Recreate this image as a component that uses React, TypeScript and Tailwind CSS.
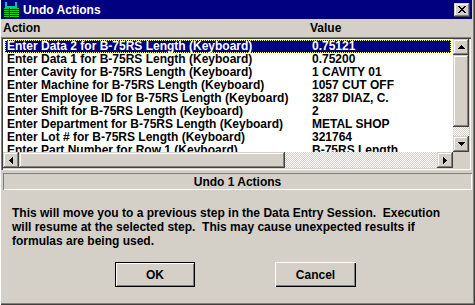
import React from "react";

const raised =
  "shadow-[inset_-1px_-1px_#404040,inset_1px_1px_#d4d0c8,inset_-2px_-2px_#808080,inset_2px_2px_#ffffff]";
const hatch =
  "bg-[repeating-conic-gradient(#ffffff_0%_25%,#d4d0c8_0%_50%)] bg-[length:2px_2px]";

type Dir = "up" | "down" | "left" | "right";

function Tri({ dir }: { dir: Dir }) {
  if (dir === "up" || dir === "down") {
    const rows = dir === "up" ? [0, 1, 2, 3] : [3, 2, 1, 0];
    return (
      <svg width="7" height="4" viewBox="0 0 7 4" shapeRendering="crispEdges">
        {rows.map((r, i) => (
          <rect key={i} x={3 - r} y={i} width={2 * r + 1} height={1} fill="#000" />
        ))}
      </svg>
    );
  }
  const cols = dir === "left" ? [0, 1, 2, 3] : [3, 2, 1, 0];
  return (
    <svg width="4" height="7" viewBox="0 0 4 7" shapeRendering="crispEdges">
      {cols.map((c, i) => (
        <rect key={i} x={i} y={3 - c} width={1} height={2 * c + 1} fill="#000" />
      ))}
    </svg>
  );
}

function ArrowBtn({ dir }: { dir: Dir }) {
  return (
    <div className={`w-4 h-4 shrink-0 bg-[#d4d0c8] flex items-center justify-center ${raised}`}>
      <Tri dir={dir} />
    </div>
  );
}

function AppIcon() {
  return (
    <svg width="16" height="16" viewBox="0 0 16 16" shapeRendering="crispEdges">
      <rect x="1" y="0" width="2" height="6" fill="#00c0c0" />
      <rect x="11" y="0" width="2" height="6" fill="#00c0c0" />
      <rect x="1" y="4" width="12" height="2" fill="#00c0c0" />
      <rect x="3" y="3" width="8" height="1" fill="#000000" />
      <rect x="0" y="6" width="15" height="10" fill="#00e000" />
      {[7, 9, 11, 13, 15].map((y) => (
        <rect key={y} x="0" y={y} width="15" height="1" fill="#000000" />
      ))}
      <rect x="5" y="6" width="1" height="10" fill="#000000" />
      <rect x="15" y="6" width="1" height="10" fill="#000000" />
    </svg>
  );
}

const rows: [string, string][] = [
  ["Enter Data 2 for B-75RS Length (Keyboard)", "0.75121"],
  ["Enter Data 1 for B-75RS Length (Keyboard)", "0.75200"],
  ["Enter Cavity for B-75RS Length (Keyboard)", "1 CAVITY 01"],
  ["Enter Machine for B-75RS Length (Keyboard)", "1057 CUT OFF"],
  ["Enter Employee ID for B-75RS Length (Keyboard)", "3287 DIAZ, C."],
  ["Enter Shift for B-75RS Length (Keyboard)", "2"],
  ["Enter Department for B-75RS Length (Keyboard)", "METAL SHOP"],
  ["Enter Lot # for B-75RS Length (Keyboard)", "321764"],
  ["Enter Part Number for Row 1 (Keyboard)", "B-75RS Length"],
];

export default function App() {
  return (
    <div className="w-[475px] h-[305px] overflow-hidden bg-[#d4d0c8] flex flex-col pl-[1px] pr-[3px] pb-[2px] shadow-[inset_1px_0_#ffffff,inset_-1px_-1px_#404040,inset_-2px_-2px_#808080] font-['Liberation_Sans',Arial,sans-serif] font-bold text-[12px] text-black">
      {/* Title bar */}
      <div className="h-[19px] shrink-0 bg-[#000080] flex items-center pl-[3px] pr-[2px]">
        <AppIcon />
        <span className="ml-[3px] text-white leading-[14px]">Undo Actions</span>
        <div className={`ml-auto w-4 h-[14px] bg-[#d4d0c8] flex items-center justify-center ${raised}`}>
          <svg width="8" height="7" viewBox="0 0 8 7" shapeRendering="crispEdges">
            <path d="M0 0h2v1h-2zM6 0h2v1h-2zM1 1h2v1h-2zM5 1h2v1h-2zM2 2h4v1h-4zM3 3h2v1h-2zM2 4h4v1h-4zM1 5h2v1h-2zM5 5h2v1h-2zM0 6h2v1h-2zM6 6h2v1h-2z" fill="#000" />
          </svg>
        </div>
      </div>

      {/* Column headers */}
      <div className="h-[18px] shrink-0 flex items-center pl-[2px] leading-[14px]">
        <span className="w-[307px]">Action</span>
        <span>Value</span>
      </div>

      {/* List box */}
      <div className="w-[470px] h-[133px] shrink-0 p-[2px] flex flex-col shadow-[inset_1px_1px_#808080,inset_2px_2px_#404040,inset_-1px_-1px_#ffffff,inset_-2px_-2px_#d4d0c8]">
        <div className="flex h-[113px]">
          <div className="flex-1 bg-white overflow-hidden pt-[1px] px-[2px]">
            {rows.map(([a, v], i) => (
              <div
                key={i}
                className={
                  i === 0
                    ? "h-[13px] leading-[13px] flex whitespace-nowrap bg-[#000080] text-white outline-1 outline-dotted outline-[#ffff7f] -outline-offset-1"
                    : "h-[13px] leading-[13px] flex whitespace-nowrap"
                }
              >
                <span className="w-[307px] shrink-0 pl-[2px]">{a}</span>
                <span>{v}</span>
              </div>
            ))}
          </div>
          <div className="w-4 flex flex-col shrink-0">
            <ArrowBtn dir="up" />
            <div className={`h-[72px] bg-[#d4d0c8] ${raised}`} />
            <div className={`flex-1 ${hatch}`} />
            <ArrowBtn dir="down" />
          </div>
        </div>
        <div className="flex h-4">
          <ArrowBtn dir="left" />
          <div className={`w-[266px] h-4 bg-[#d4d0c8] ${raised}`} />
          <div className={`flex-1 ${hatch}`} />
          <ArrowBtn dir="right" />
          <div className="w-4 h-4 bg-[#d4d0c8]" />
        </div>
      </div>

      {/* Status */}
      <div className="mt-[3px] ml-[2px] w-[469px] h-[17px] shrink-0 flex items-center justify-center leading-[14px] shadow-[inset_1px_1px_#808080,inset_-1px_-1px_#ffffff]">
        Undo 1 Actions
      </div>

      {/* Message */}
      <div className="mt-[16px] pl-[11px] leading-[14px] whitespace-pre">
        <div>This will move you to a previous step in the Data Entry Session.  Execution</div>
        <div>will resume at the selected step.  This may cause unexpected results if</div>
        <div>formulas are being used.</div>
      </div>

      {/* Buttons */}
      <div className="mt-[14px] ml-[114px] flex gap-[80px]">
        <div className="w-[80px] h-[25px] border border-black flex items-center justify-center shadow-[inset_1px_1px_#ffffff,inset_-1px_-1px_#808080]">
          OK
        </div>
        <div className="w-[81px] h-[25px] flex items-center justify-center shadow-[inset_1px_1px_#ffffff,inset_-1px_-1px_#000000,inset_-2px_-2px_#808080]">
          Cancel
        </div>
      </div>
    </div>
  );
}
